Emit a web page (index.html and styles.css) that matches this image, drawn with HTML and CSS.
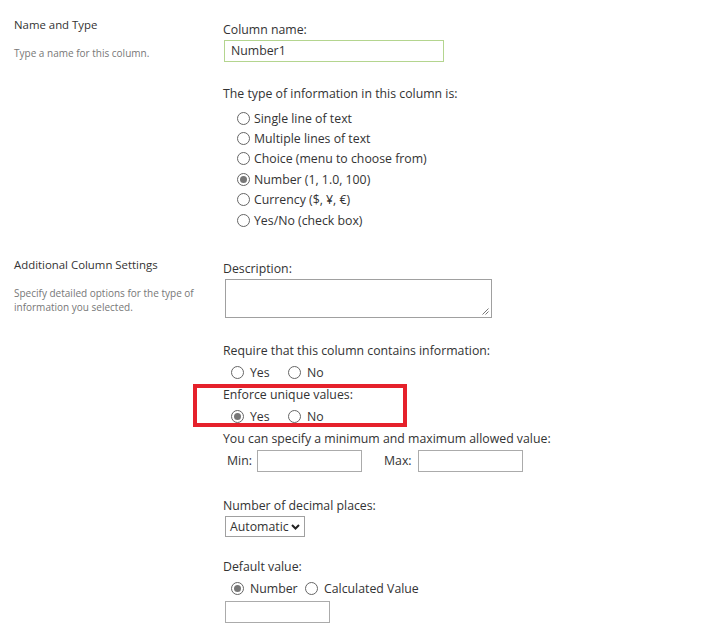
FILE: index.html
```html
<!DOCTYPE html>
<html>
<head>
<meta charset="utf-8">
<link rel="stylesheet" href="styles.css">
</head>
<body>
<div class="page">
  <section class="sec sec1">
    <div class="left">
      <div class="head">Name and Type</div>
      <div class="desc d1">Type a name for this column.</div>
    </div>
    <div class="right">
      <div class="label">Column name:</div>
      <div class="input name-input">Number1</div>
      <div class="label type-label">The type of information in this column is:</div>
      <div class="type-list">
        <div class="opt"><span class="radio"></span><span>Single line of text</span></div>
        <div class="opt"><span class="radio"></span><span>Multiple lines of text</span></div>
        <div class="opt"><span class="radio"></span><span>Choice (menu to choose from)</span></div>
        <div class="opt"><span class="radio on"></span><span>Number (1, 1.0, 100)</span></div>
        <div class="opt"><span class="radio"></span><span>Currency ($, ¥, €)</span></div>
        <div class="opt"><span class="radio"></span><span>Yes/No (check box)</span></div>
      </div>
    </div>
  </section>
  <section class="sec sec2">
    <div class="left">
      <div class="head">Additional Column Settings</div>
      <div class="desc d2">Specify detailed options for the type of information you selected.</div>
    </div>
    <div class="right">
      <div class="label">Description:</div>
      <div class="textarea">
        <svg class="grip" width="7" height="7" viewBox="0 0 7 7"><path d="M6.5 0.5 L0.5 6.5 M6.5 3.5 L3.5 6.5" stroke="#777" stroke-width="1" fill="none"/></svg>
      </div>
      <div class="label req-label">Require that this column contains information:</div>
      <div class="row">
        <span class="radio"></span><span class="t yes">Yes</span>
        <span class="radio"></span><span class="t">No</span>
      </div>
      <div class="enforce">
        <div class="label">Enforce unique values:</div>
        <div class="row">
          <span class="radio on"></span><span class="t yes">Yes</span>
          <span class="radio"></span><span class="t">No</span>
        </div>
        <div class="mark"></div>
      </div>
      <div class="label spec-label">You can specify a minimum and maximum allowed value:</div>
      <div class="minmax">
        <span class="mlabel min">Min:</span><span class="input small"></span>
        <span class="mlabel max">Max:</span><span class="input small"></span>
      </div>
      <div class="label dec-label">Number of decimal places:</div>
      <div class="select"><span>Automatic</span>
        <svg width="9" height="6" viewBox="0 0 9 6"><path d="M1 1 L4.5 4.5 L8 1" stroke="#222" stroke-width="2" fill="none"/></svg>
      </div>
      <div class="label def-label">Default value:</div>
      <div class="row def-row">
        <span class="radio on"></span><span class="t num">Number</span>
        <span class="radio"></span><span class="t">Calculated Value</span>
      </div>
      <div class="input small def-input"></div>
    </div>
  </section>
</div>
</body>
</html>
```

FILE: styles.css
```css
html, body {
  margin: 0;
  padding: 0;
  background: #fff;
}
body {
  font-family: "Open Sans", "Noto Sans", sans-serif;
  font-size: 12.3px;
  color: #333;
  width: 710px;
  height: 641px;
  overflow: hidden;
}
.sec {
  display: grid;
  grid-template-columns: 223px 1fr;
  align-items: start;
}
.left {
  padding-left: 14px;
}
.sec1 .left { padding-top: 15px; }
.sec1 .right { padding-top: 20px; }
.sec2 .left { padding-top: 25px; }
.sec2 .right { padding-top: 29px; }
.head {
  line-height: 20px;
  font-size: 11.4px;
  color: #333;
}
.desc {
  font-size: 10px;
  color: #777;
  line-height: 14px;
  width: 195px;
}
.d1 { margin-top: 11px; }
.d2 { margin-top: 11px; }
.label {
  line-height: 20px;
  white-space: nowrap;
}
.input {
  box-sizing: border-box;
  border: 1px solid #ababab;
  height: 22px;
  background: #fff;
}
.name-input {
  width: 220px;
  margin-left: 1px;
  border-color: #b4d58f;
  line-height: 20px;
  padding-left: 6px;
}
.type-label { margin-top: 22px; }
.type-list {
  margin-top: 4px;
  padding-left: 14px;
}
.opt {
  height: 20.4px;
  display: flex;
  align-items: center;
  gap: 4px;
}
.radio {
  box-sizing: border-box;
  width: 13px;
  height: 13px;
  border: 1px solid #666;
  border-radius: 50%;
  background: #fff;
  display: inline-block;
  flex: none;
  position: relative;
}
.radio.on::after {
  content: "";
  position: absolute;
  left: 2px;
  top: 2px;
  width: 7px;
  height: 7px;
  border-radius: 50%;
  background: #777;
}
.textarea {
  box-sizing: border-box;
  width: 267px;
  height: 39px;
  margin-left: 2px;
  border: 1px solid #a0a0a0;
  position: relative;
}
.grip {
  position: absolute;
  right: 2px;
  bottom: 2px;
}
.req-label { margin-top: 23px; }
.row {
  height: 20px;
  display: flex;
  align-items: center;
  padding-left: 8px;
  margin-top: 1px;
}
.row .t { margin-left: 6px; }
.row .t.yes { width: 38px; }
.def-row .t.num { margin-left: 6px; width: 55px; }
.enforce {
  position: relative;
  margin-top: 3px;
}
.enforce .row { margin-top: 1px; }
.mark {
  position: absolute;
  left: -30px;
  top: -1px;
  width: 214px;
  height: 43px;
  box-sizing: border-box;
  border: 4px solid #e5212b;
  pointer-events: none;
}
.spec-label { margin-top: 3px; }
.minmax {
  display: flex;
  align-items: center;
  margin-top: 1px;
  height: 22px;
}
.mlabel { line-height: 22px; }
.min { margin-left: 4px; width: 30px; }
.max { margin-left: 22px; width: 34px; }
.input.small {
  width: 105px;
  display: inline-block;
}
.dec-label { margin-top: 24px; }
.select {
  box-sizing: border-box;
  width: 80px;
  height: 21px;
  margin-left: 2px;
  border: 1px solid #a0a0a0;
  display: flex;
  align-items: center;
  padding-left: 4px;
  gap: 2px;
}
.def-label { margin-top: 20px; }
.def-row { margin-top: 1px; }
.def-input {
  margin-top: 3px;
  margin-left: 2px;
}
```
